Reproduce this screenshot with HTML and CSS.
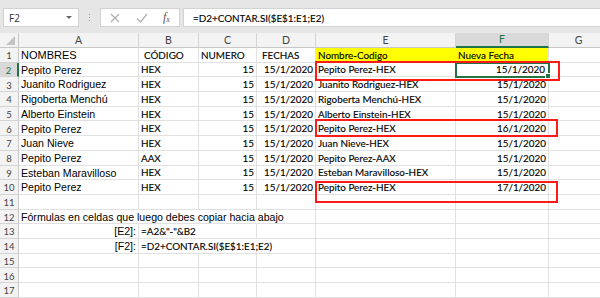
FILE: index.html
```html
<!DOCTYPE html>
<html>
<head>
    <title>Hoja de cálculo</title>
    <meta charset="utf-8">
    <link rel="stylesheet" href="styles.css">
    <script>
        var cols = ["A", "B", "C", "D", "E", "F", "G"];
        var rows = [
            ["NOMBRES", "CÓDIGO", "NUMERO", "FECHAS", "Nombre-Codigo", "Nueva Fecha"],
            ["Pepito Perez", "HEX", "15", "15/1/2020", "Pepito Perez-HEX", "15/1/2020"],
            ["Juanito Rodriguez", "HEX", "15", "15/1/2020", "Juanito Rodriguez-HEX", "15/1/2020"],
            ["Rigoberta Menchú", "HEX", "15", "15/1/2020", "Rigoberta Menchú-HEX", "15/1/2020"],
            ["Alberto Einstein", "HEX", "15", "15/1/2020", "Alberto Einstein-HEX", "15/1/2020"],
            ["Pepito Perez", "HEX", "15", "15/1/2020", "Pepito Perez-HEX", "16/1/2020"],
            ["Juan Nieve", "HEX", "15", "15/1/2020", "Juan Nieve-HEX", "15/1/2020"],
            ["Pepito Perez", "AAX", "15", "15/1/2020", "Pepito Perez-AAX", "15/1/2020"],
            ["Esteban Maravilloso", "HEX", "15", "15/1/2020", "Esteban Maravilloso-HEX", "15/1/2020"],
            ["Pepito Perez", "HEX", "15", "15/1/2020", "Pepito Perez-HEX", "17/1/2020"]
        ];

        function cell(sheet, text, cls, span) {
            var div = document.createElement("div");
            div.className = "cell " + (cls || "");
            div.textContent = text || "";
            if (span)
                div.style.gridColumn = "span " + span;
            sheet.appendChild(div);
            return div;
        }

        function fillSheet() {
            var sheet = document.getElementById("sheet");

            cell(sheet, "", "corner");
            for (var c = 0; c < cols.length; c++)
                cell(sheet, cols[c], "colhead" + (cols[c] == "F" ? " active" : ""));

            for (var r = 1; r <= 17; r++) {
                cell(sheet, r, "rowhead" + (r == 2 ? " active" : ""));
                var data = rows[r - 1];
                if (data) {
                    cell(sheet, data[0], "arial" + (r == 1 ? " title" : ""));
                    cell(sheet, data[1], r == 1 ? "h-code" : "");
                    cell(sheet, data[2], r == 1 ? "h-num" : "num");
                    cell(sheet, data[3], r == 1 ? "h-date" : "num");
                    cell(sheet, data[4], r == 1 ? "yellow" : "");
                    var f = cell(sheet, data[5], r == 1 ? "yellow" : "num");
                    if (r == 2)
                        f.className += " selected";
                    cell(sheet, "");
                } else if (r == 12) {
                    cell(sheet, "Fórmulas en celdas que luego debes copiar hacia abajo", "arial", 4);
                    for (var i = 0; i < 3; i++) cell(sheet, "");
                } else if (r == 13 || r == 14) {
                    cell(sheet, r == 13 ? "[E2]:" : "[F2]:", "arial num");
                    if (r == 13) {
                        cell(sheet, "=A2&\"-\"&B2", "", 2);
                        cell(sheet, "");
                    } else {
                        cell(sheet, "=D2+CONTAR.SI($E$1:E1;E2)", "", 3);
                    }
                    for (var i = 0; i < 3; i++) cell(sheet, "");
                } else {
                    for (var i = 0; i < 7; i++) cell(sheet, "");
                }
            }
        }
    </script>
</head>
<body onload="fillSheet();">
    <div class="toolbar">
        <div class="namebox">
            <span>F2</span>
            <span class="caret"></span>
        </div>
        <div class="grip"><i></i><i></i><i></i></div>
        <div class="fxbuttons">
            <svg width="12" height="12" viewBox="0 0 12 12"><path d="M2 2 L10 10 M10 2 L2 10" stroke="#b0b0b0" stroke-width="1.2" fill="none"/></svg>
            <svg width="14" height="12" viewBox="0 0 14 12"><path d="M2 6.5 L5.5 10 L12 2" stroke="#b0b0b0" stroke-width="1.2" fill="none"/></svg>
            <span class="fx">f<sub>x</sub></span>
        </div>
        <div class="formula">=D2+CONTAR.SI($E$1:E1;E2)</div>
    </div>

    <div class="wrap">
        <div id="sheet" class="sheet"></div>
        <div class="mark mark1"></div>
        <div class="mark mark2"></div>
        <div class="mark mark3"></div>
    </div>
</body>
</html>
```

FILE: styles.css
```css
html, body {
    margin: 0;
    padding: 0;
}
body {
    width: 600px;
    height: 298px;
    overflow: hidden;
    background: #e6e6e6;
    font-family: Lato, "Liberation Sans", sans-serif;
}

.toolbar {
    display: flex;
    align-items: stretch;
    height: 19px;
    padding: 8px 0 6px 3px;
}
.namebox {
    display: flex;
    align-items: center;
    justify-content: space-between;
    width: 76px;
    box-sizing: border-box;
    padding: 0 6px 0 5px;
    background: #fff;
    border: 1px solid #d2d2d2;
    font-family: "Open Sans", sans-serif;
    font-size: 10px;
    color: #333;
}
.caret {
    width: 0;
    height: 0;
    border-left: 3px solid transparent;
    border-right: 3px solid transparent;
    border-top: 3px solid #666;
}
.grip {
    display: flex;
    flex-direction: column;
    justify-content: center;
    gap: 2px;
    width: 21px;
    align-items: center;
}
.grip i {
    width: 1px;
    height: 1px;
    background: #9a9a9a;
}
.fxbuttons {
    display: flex;
    align-items: center;
    width: 80px;
    box-sizing: border-box;
    padding-left: 8px;
    gap: 14px;
    background: #fff;
    border: 1px solid #d2d2d2;
}
.fx {
    font-family: "Liberation Serif", serif;
    font-style: italic;
    font-size: 12px;
    color: #555;
}
.fx sub {
    font-size: 8px;
    vertical-align: -1px;
}
.formula {
    flex: 1;
    margin-left: 3px;
    padding-left: 9px;
    display: flex;
    align-items: center;
    background: #fff;
    border: 1px solid #d2d2d2;
    border-right: none;
    font-size: 9.9px;
    color: #000;
    -webkit-text-stroke: 0.12px #000;
}

.wrap {
    position: relative;
}
.sheet {
    display: grid;
    grid-template-columns: 19px 120px 60px 58px 59px 140px 93px 60px;
    grid-template-rows: 15px repeat(17, 14.7px);
    background: #fff;
    font-size: 9.9px;
    color: #000;
}
.cell {
    display: flex;
    align-items: flex-end;
    box-sizing: border-box;
    padding: 0 2px 1px 2px;
    border-right: 1px solid #e1e1e1;
    border-bottom: 1px solid #e1e1e1;
    white-space: nowrap;
    line-height: 1;
    -webkit-text-stroke: 0.12px #000;
}
.arial {
    font-family: "Liberation Sans", sans-serif;
    font-size: 10.6px;
    -webkit-text-stroke: 0;
}
.title {
    font-size: 11px;
}
.num {
    justify-content: flex-end;
}
.h-code {
    padding-left: 5px;
}
.h-num {
    padding-left: 2px;
}
.h-date {
    padding-left: 5px;
}
.yellow {
    background: #ffff00;
}
.selected {
    position: relative;
    outline: 2px solid #217346;
    outline-offset: -1px;
    padding-right: 3px;
}
.selected::after {
    content: "";
    position: absolute;
    right: -3px;
    bottom: -3px;
    width: 4px;
    height: 4px;
    background: #217346;
    border: 1px solid #fff;
}

.corner, .colhead, .rowhead {
    background: #f3f3f3;
    color: #444;
    justify-content: center;
    padding: 0;
    border-color: #d4d4d4;
    -webkit-text-stroke: 0;
}
.colhead {
    align-items: center;
    font-size: 10.5px;
    border-bottom-color: #c8c8c8;
}
.rowhead {
    font-size: 9.5px;
    padding-bottom: 1px;
    border-right-color: #c8c8c8;
}
.corner {
    position: relative;
    border-bottom-color: #c8c8c8;
    border-right-color: #c8c8c8;
}
.corner::after {
    content: "";
    position: absolute;
    right: 3px;
    bottom: 2px;
    width: 0;
    height: 0;
    border-left: 9px solid transparent;
    border-bottom: 9px solid #c3c3c3;
}
.colhead.active {
    background: #d9d9d9;
    color: #217346;
    border-bottom: 2px solid #217346;
}
.rowhead.active {
    background: #d9d9d9;
    color: #217346;
    border-right: 2px solid #217346;
}

.mark {
    position: absolute;
    left: 315px;
    width: 243px;
    box-sizing: border-box;
    border: 2px solid #ff1a1a;
}
.mark1 {
    top: 28px;
    width: 245px;
    height: 20px;
}
.mark2 {
    top: 86px;
    height: 18px;
}
.mark3 {
    top: 148px;
    height: 22px;
}
```
